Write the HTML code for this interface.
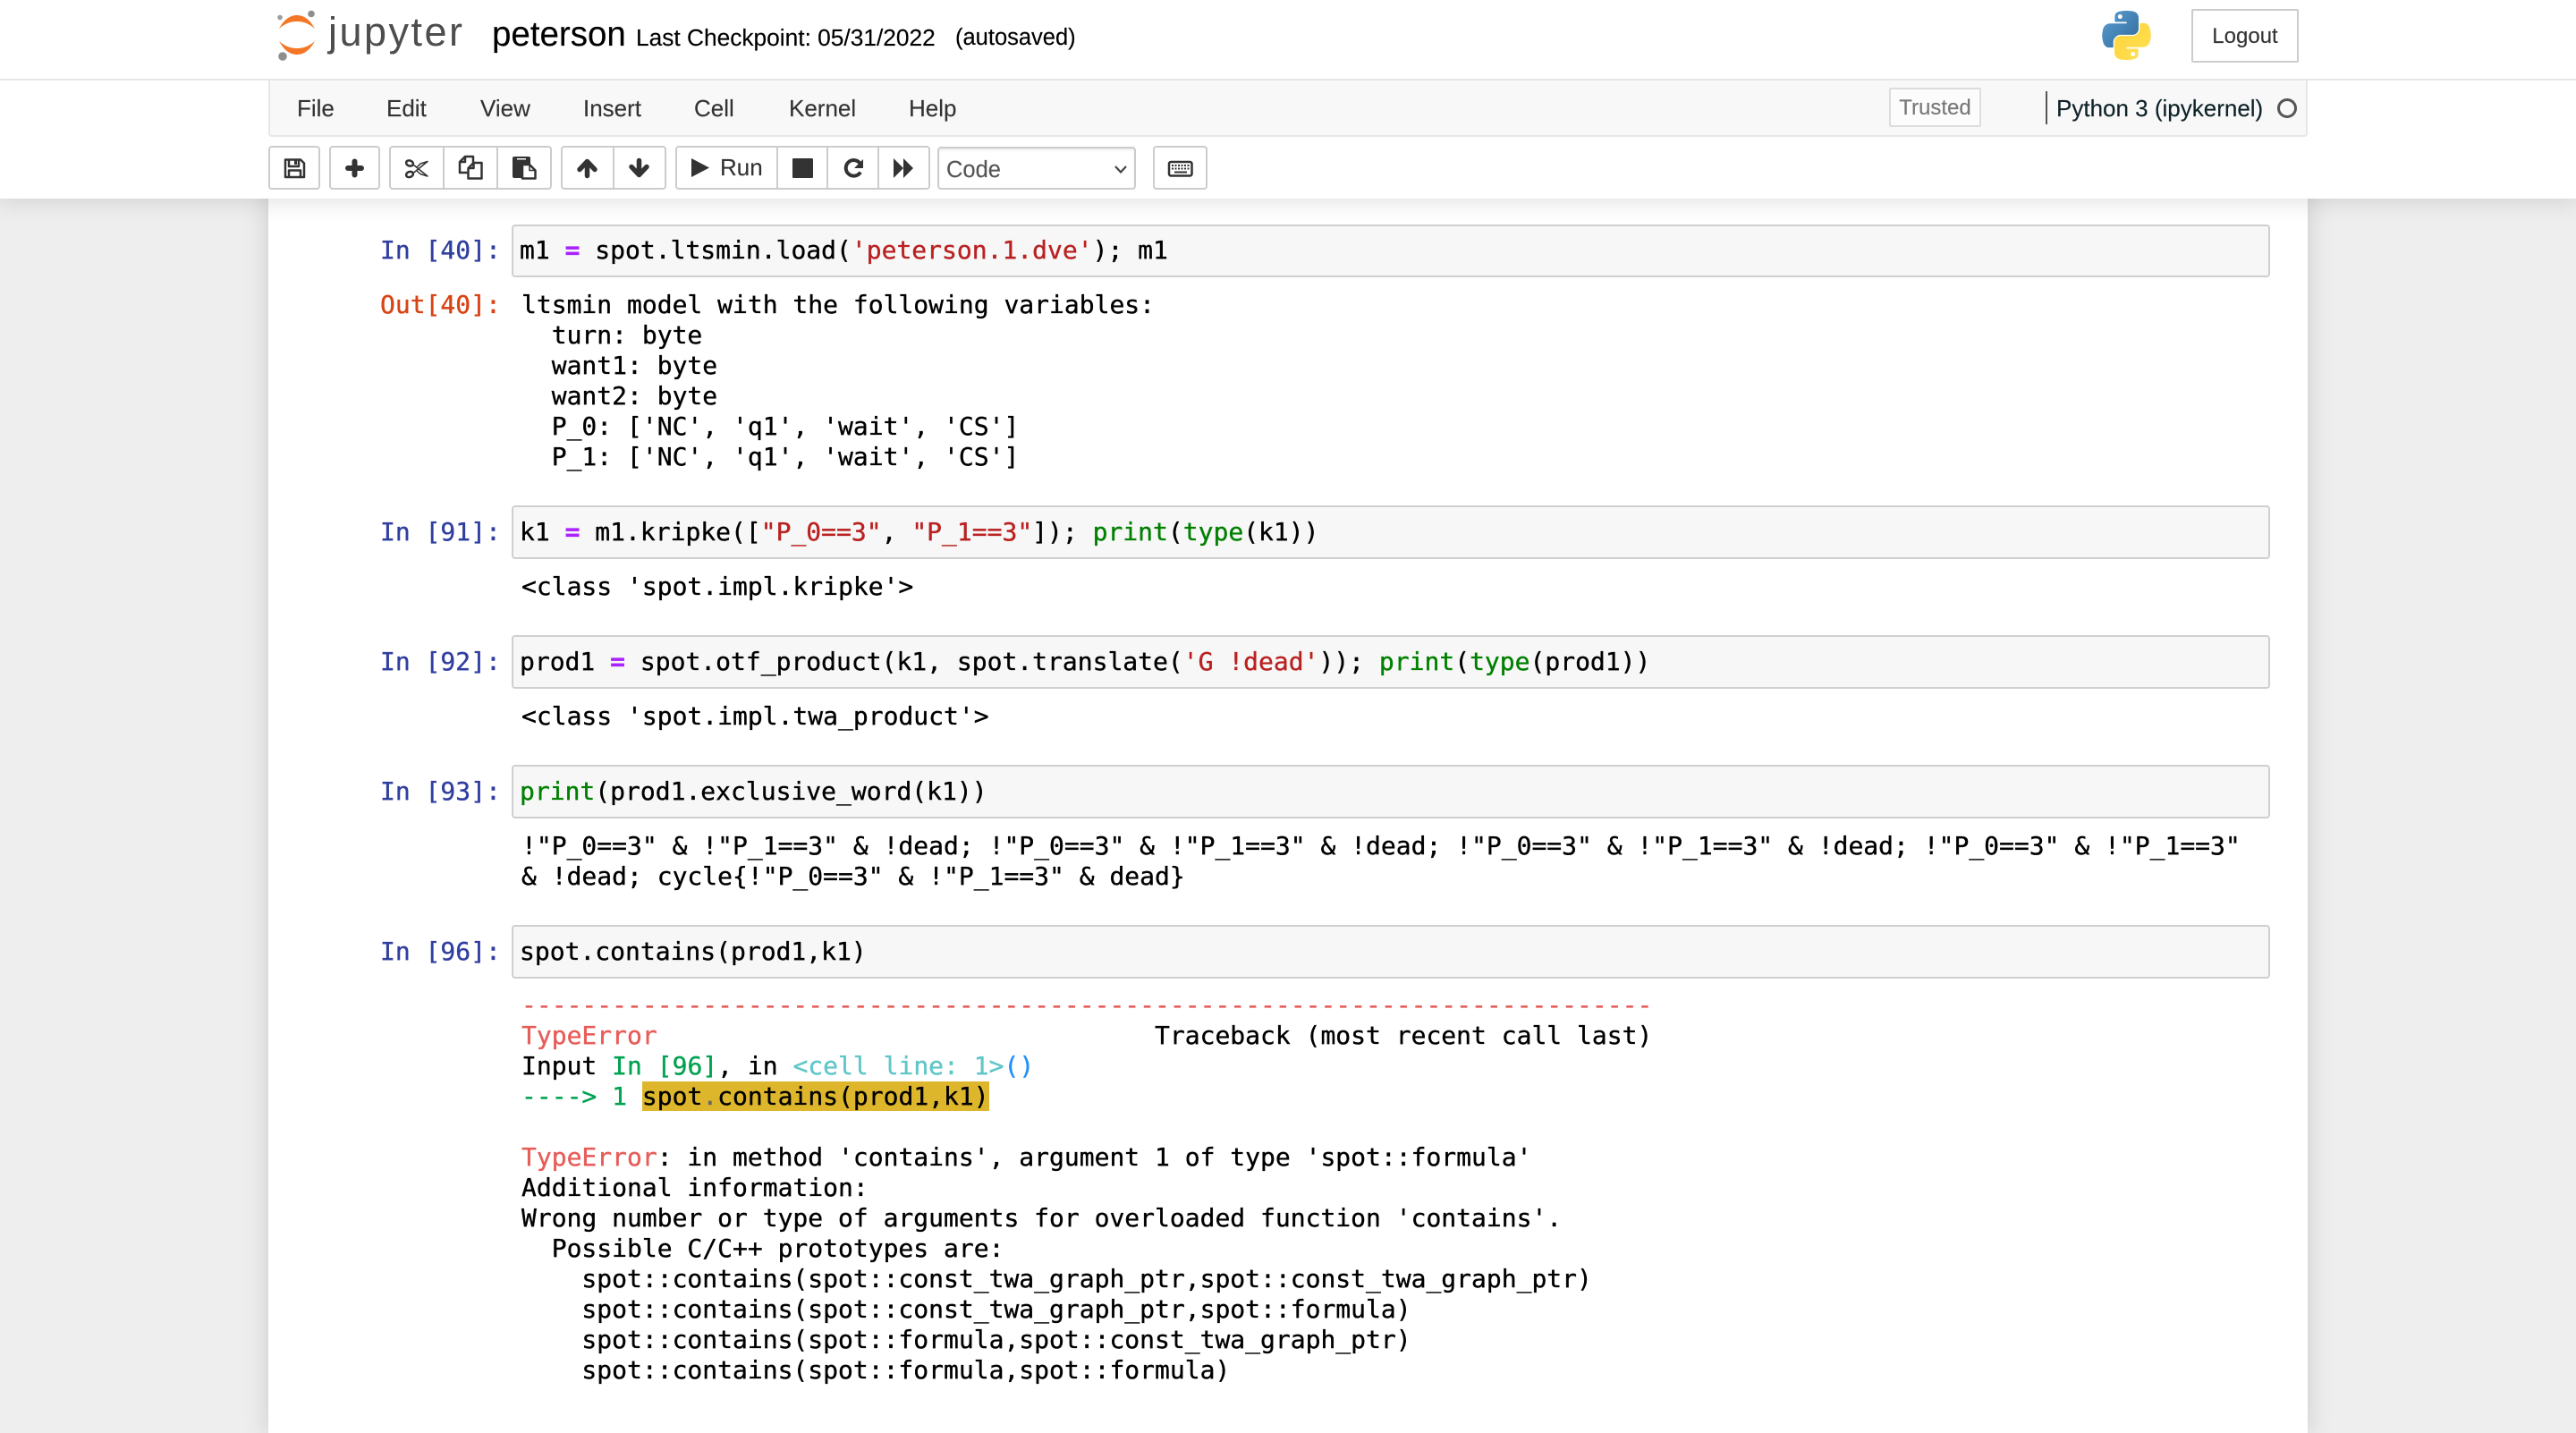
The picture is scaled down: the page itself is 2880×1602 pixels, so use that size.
<!DOCTYPE html>
<html><head><meta charset="utf-8"><title>peterson</title>
<style>
*{box-sizing:border-box}
html,body{margin:0;padding:0;width:2880px;height:1602px;overflow:hidden;background:#eee;font-family:"Liberation Sans",sans-serif;color:#000}
.abs,pre,.s{position:absolute}
#nb{position:absolute;left:300px;top:200px;width:2280px;height:1402px;background:#fff;box-shadow:0 0 24px 2px rgba(87,87,87,.2)}
#hd{position:absolute;left:0;top:0;width:2880px;height:222px;background:#fff;box-shadow:0 0 24px 2px rgba(87,87,87,.2)}
#line{position:absolute;left:0;top:88px;width:2880px;height:2px;background:#e7e7e7}
#menu{position:absolute;left:300px;top:90px;width:2280px;height:63px;background:#f8f8f8;border:2px solid #e7e7e7;border-top:0;border-radius:0 0 4px 4px}
.m{position:absolute;top:106px;font-size:26px;line-height:30px;color:#333}
.btn{position:absolute;top:163px;height:49px;background:#fff;border:2px solid #ccc;border-radius:4px}
.div{position:absolute;top:163px;height:49px;width:2px;background:#ccc}
.box{position:absolute;left:572px;width:1966px;height:60px;background:#f7f7f7;border:2px solid #cfcfcf;border-radius:4px}
pre{margin:0;font-family:"DejaVu Sans Mono","Liberation Mono",monospace;font-size:28px;line-height:34px;white-space:pre;color:#000;-webkit-text-stroke:.35px currentColor}
.abs,.m{-webkit-text-stroke:.15px currentColor}
.i{left:581px}.o{left:583px}.p{left:425px;color:#303f9f}.pr{left:425px;color:#d84315}
.kw{color:#008000}.st{color:#ba2121}.op{color:#a2f;font-weight:bold}
.r{color:#e75c58}.g{color:#00a250}.c{color:#60c6c8}.b{color:#208ffb}.y{background:#ddb62b}.dot{color:#666}
</style></head><body>
<div id="nb"></div>
<div id="hd"></div>
<div id="line"></div>

<svg class="abs" style="left:300px;top:0" width="240" height="80" viewBox="300 0 240 80">
<path d="M312 32 C318 21 325 17 332 17 C339 17 346 21 352 32 C345 26 339 24 332 24 C325 24 319 26 312 32Z" fill="#f37726"/>
<path d="M312 46 C318 57 325 61 332 61 C339 61 346 57 352 46 C345 52 339 54 332 54 C325 54 319 52 312 46Z" fill="#f37726"/>
<circle cx="313" cy="19.500" r="2.800" fill="#9e9e9e"/><circle cx="348" cy="15.500" r="3.800" fill="#8e8e8e"/><circle cx="316" cy="63" r="4.800" fill="#8e8e8e"/>
<text x="367" y="51" font-family="Liberation Sans,sans-serif" font-size="45" fill="#4e4e4e" textLength="150" lengthAdjust="spacing">jupyter</text>
</svg>

<div class="abs" style="left:550px;top:17px;font-size:38.500px;line-height:44px">peterson</div>
<div class="abs" style="left:711px;top:27px;font-size:26.300px;line-height:30px">Last Checkpoint: 05/31/2022</div>
<div class="abs" style="left:1068px;top:27px;font-size:25.500px;line-height:30px">(autosaved)</div>

<svg class="abs" style="left:2350px;top:12px" width="55" height="55" viewBox="0 0 110 110">
<defs><linearGradient id="pb" x1="0" y1="0" x2="1" y2="1"><stop offset="0" stop-color="#5a9fd4"/><stop offset="1" stop-color="#306998"/></linearGradient>
<linearGradient id="py" x1="0" y1="0" x2="1" y2="1"><stop offset="0" stop-color="#ffe052"/><stop offset="1" stop-color="#ffd43b"/></linearGradient></defs>
<path fill="url(#pb)" fill-rule="evenodd" d="M54.900 0C50.300 0 45.900.4 42.100 1.100 30.800 3.100 28.800 7.200 28.800 14.900V25.100H55.300V28.500H18.800C11.100 28.500 4.400 33.100 2.300 41.900-.1 52-.2 58.300 2.300 68.900 4.200 76.700 8.600 82.300 16.300 82.300H25.400V70.200C25.400 61.400 33 53.700 42.100 53.700H68.600C76 53.700 81.900 47.600 81.900 40.200V14.900C81.900 7.700 75.800 2.300 68.600 1.100 64 .3 59.400 0 54.900 0ZM40.600 8.100A5 5 0 1 1 40.600 18.100 5 5 0 1 1 40.600 8.100Z"/>
<path fill="url(#py)" fill-rule="evenodd" transform="rotate(180 55 55)" d="M54.900 0C50.300 0 45.900.4 42.100 1.100 30.800 3.100 28.800 7.200 28.800 14.900V25.100H55.300V28.500H18.800C11.100 28.500 4.400 33.100 2.300 41.900-.1 52-.2 58.300 2.300 68.900 4.200 76.700 8.600 82.300 16.300 82.300H25.400V70.200C25.400 61.400 33 53.700 42.100 53.700H68.600C76 53.700 81.900 47.600 81.900 40.200V14.900C81.900 7.700 75.800 2.300 68.600 1.100 64 .3 59.400 0 54.900 0ZM40.600 8.100A5 5 0 1 1 40.600 18.100 5 5 0 1 1 40.600 8.100Z"/>
</svg>

<div class="abs" style="left:2450px;top:10px;width:120px;height:60px;background:#fff;border:2px solid #ccc;border-radius:2px;font-size:24px;line-height:58px;text-align:center;color:#333">Logout</div>

<div id="menu"></div>
<div class="m" style="left:332px">File</div>
<div class="m" style="left:432px">Edit</div>
<div class="m" style="left:537px">View</div>
<div class="m" style="left:652px">Insert</div>
<div class="m" style="left:776px">Cell</div>
<div class="m" style="left:882px">Kernel</div>
<div class="m" style="left:1016px">Help</div>

<div class="abs" style="left:2112px;top:98px;width:103px;height:44px;background:#fcfcfc;border:2px solid #ddd;border-radius:2px;font-size:24px;line-height:42px;text-align:center;color:#777">Trusted</div>
<div class="abs" style="left:2287px;top:102px;width:2px;height:37px;background:#555"></div>
<div class="abs" style="left:2299px;top:106px;font-size:26px;line-height:30px;color:#0d2229">Python 3 (ipykernel)</div>
<div class="abs" style="left:2546px;top:110px;width:22px;height:22px;border:3px solid #555;border-radius:50%"></div>

<!-- toolbar -->
<div class="btn" style="left:300px;width:58px"></div>
<div class="btn" style="left:368px;width:57px"></div>
<div class="btn" style="left:435px;width:182px"></div><div class="div" style="left:495px"></div><div class="div" style="left:555px"></div>
<div class="btn" style="left:627px;width:118px"></div><div class="div" style="left:685px"></div>
<div class="btn" style="left:755px;width:285px"></div><div class="div" style="left:868px"></div><div class="div" style="left:924px"></div><div class="div" style="left:981px"></div>
<div class="abs" style="left:1048px;top:164px;width:222px;height:48px;background:#fff;border:2px solid #ccc;border-radius:4px;box-shadow:inset 0 2px 2px rgba(0,0,0,.075)"></div>
<div class="abs" style="left:805px;top:172px;font-size:26px;line-height:30px;color:#333">Run</div>
<div class="abs" style="left:1058px;top:175px;font-size:25.500px;line-height:30px;color:#555">Code</div>
<div class="btn" style="left:1289px;width:61px"></div>

<svg class="abs" style="left:0;top:0" width="1400" height="222" viewBox="0 0 1400 222">
<!-- save -->
<path fill="none" stroke="#333" stroke-width="2.500" stroke-linejoin="round" d="M319 178.500H336L340 182.500V198H319Z M323 178.500V186H334V178.500 M323 198V190.500H336V198"/>
<rect x="329" y="179" width="3" height="5" fill="#333"/>
<!-- plus -->
<path stroke="#333" stroke-width="6" stroke-linecap="round" fill="none" d="M396.500 180.500V195.500M389 188H404"/>
<!-- cut -->
<g fill="none" stroke="#333" stroke-width="2">
<ellipse cx="458" cy="182.500" rx="4" ry="3" transform="rotate(20 458 182.500)" stroke-width="2.500"/>
<ellipse cx="458" cy="195" rx="4" ry="3" transform="rotate(-20 458 195)" stroke-width="2.500"/>
<path d="M462 184L478 197 470 194.500 465 190M462 193.500L478 180.500 470 183 466 187" stroke-width="1.500" stroke-linejoin="round"/>
</g>
<!-- copy -->
<path fill="none" stroke="#333" stroke-width="2.500" stroke-linejoin="round" d="M529 182V175H520L514 181V193H523 M520 175V181H514 M538.500 182V199.500H523.500V188L529.500 182Z M529.500 182V188H523.500"/>
<!-- paste -->
<path fill="#333" d="M575 175H591Q593 175 593 177V183H587L583 187V199H575Q573 199 573 197V177Q573 175 575 175Z"/>
<rect x="578" y="177" width="10" height="1.500" fill="#fff"/>
<path fill="#fff" stroke="#333" stroke-width="2.500" stroke-linejoin="round" d="M584 199.500V184H592L598.500 190.500V199.500Z"/>
<path fill="none" stroke="#333" stroke-width="1.500" d="M592 184V190.500H598.500"/>
<!-- up/down -->
<path fill="none" stroke="#333" stroke-width="5.500" stroke-linecap="round" stroke-linejoin="round" d="M656.500 196.500V181M648 189.500L656.500 180.500L665 189.500"/>
<path fill="none" stroke="#333" stroke-width="5.500" stroke-linecap="round" stroke-linejoin="round" d="M714.500 179.500V195M706 186.500L714.500 195.500L723 186.500"/>
<!-- run -->
<path fill="#333" d="M773 177L793 187.500L773 198Z"/>
<!-- stop -->
<rect x="886" y="177" width="23" height="22" rx="1" fill="#333"/>
<!-- restart -->
<path fill="none" stroke="#333" stroke-width="4" d="M961.500 182.500A8.800 8.800 0 1 0 962 192.500"/>
<path fill="#333" d="M965 178V188H955Z"/>
<!-- forward -->
<path fill="#333" d="M999 177L1010 188L999 199ZM1010 177L1021 188L1010 199Z"/>
<!-- chevron -->
<path fill="none" stroke="#444" stroke-width="2.200" d="M1247 186L1253 192.500L1259 186"/>
<!-- keyboard -->
<rect x="1307" y="181" width="25.500" height="15.500" rx="2" fill="none" stroke="#333" stroke-width="2.500"/>
<path stroke="#333" stroke-width="2" stroke-dasharray="2 1.500" fill="none" d="M1310 185H1330M1310 188.500H1330"/>
<path stroke="#333" stroke-width="2" fill="none" d="M1313 192.500H1327"/>
</svg>

<!-- cell 40 -->
<div class="box" style="top:251px;height:59px"></div>
<pre class="p" style="top:263px">In [40]:</pre>
<pre class="i" style="top:263px">m1 <span class="op">=</span> spot.ltsmin.load(<span class="st">'peterson.1.dve'</span>); m1</pre>
<pre class="pr" style="top:324px">Out[40]:</pre>
<pre class="o" style="top:324px">ltsmin model with the following variables:
  turn: byte
  want1: byte
  want2: byte
  P_0: ['NC', 'q1', 'wait', 'CS']
  P_1: ['NC', 'q1', 'wait', 'CS']</pre>

<!-- cell 91 -->
<div class="box" style="top:565px"></div>
<pre class="p" style="top:578px">In [91]:</pre>
<pre class="i" style="top:578px">k1 <span class="op">=</span> m1.kripke([<span class="st">"P_0==3"</span>, <span class="st">"P_1==3"</span>]); <span class="kw">print</span>(<span class="kw">type</span>(k1))</pre>
<pre class="o" style="top:639px">&lt;class 'spot.impl.kripke'&gt;</pre>

<!-- cell 92 -->
<div class="box" style="top:710px"></div>
<pre class="p" style="top:723px">In [92]:</pre>
<pre class="i" style="top:723px">prod1 <span class="op">=</span> spot.otf_product(k1, spot.translate(<span class="st">'G !dead'</span>)); <span class="kw">print</span>(<span class="kw">type</span>(prod1))</pre>
<pre class="o" style="top:784px">&lt;class 'spot.impl.twa_product'&gt;</pre>

<!-- cell 93 -->
<div class="box" style="top:855px"></div>
<pre class="p" style="top:868px">In [93]:</pre>
<pre class="i" style="top:868px"><span class="kw">print</span>(prod1.exclusive_word(k1))</pre>
<pre class="o" style="top:929px">!"P_0==3" &amp; !"P_1==3" &amp; !dead; !"P_0==3" &amp; !"P_1==3" &amp; !dead; !"P_0==3" &amp; !"P_1==3" &amp; !dead; !"P_0==3" &amp; !"P_1==3"
&amp; !dead; cycle{!"P_0==3" &amp; !"P_1==3" &amp; dead}</pre>

<!-- cell 96 -->
<div class="box" style="top:1034px"></div>
<pre class="p" style="top:1047px">In [96]:</pre>
<pre class="i" style="top:1047px">spot.contains(prod1,k1)</pre>
<pre class="o" style="top:1107px"><span class="r">---------------------------------------------------------------------------</span>
<span class="r">TypeError</span>                                 Traceback (most recent call last)
Input <span class="g">In [96]</span>, in <span class="c">&lt;cell line: 1&gt;</span><span class="b">()</span>
<span class="g">----&gt; 1</span> <span class="y">spot<span class="dot">.</span>contains(prod1,k1)</span>

<span class="r">TypeError</span>: in method 'contains', argument 1 of type 'spot::formula'
Additional information:
Wrong number or type of arguments for overloaded function 'contains'.
  Possible C/C++ prototypes are:
    spot::contains(spot::const_twa_graph_ptr,spot::const_twa_graph_ptr)
    spot::contains(spot::const_twa_graph_ptr,spot::formula)
    spot::contains(spot::formula,spot::const_twa_graph_ptr)
    spot::contains(spot::formula,spot::formula)</pre>
</body></html>
